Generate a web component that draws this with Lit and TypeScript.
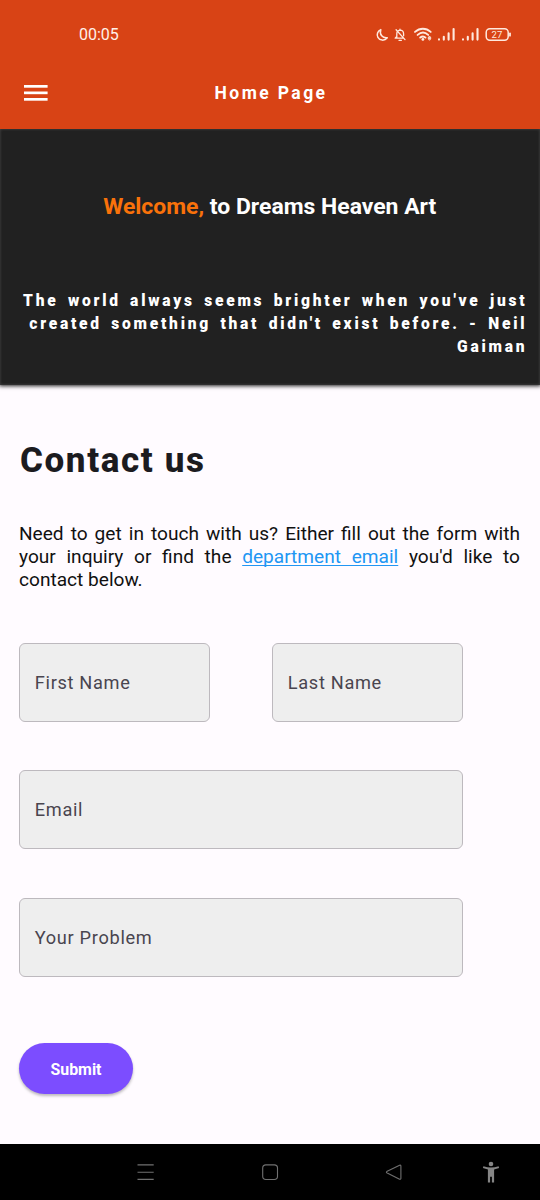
import { LitElement, html, css } from "lit";
import { customElement } from "lit/decorators.js";

@customElement("status-bar")
class StatusBar extends LitElement {
  static styles = css`
    :host { display: flex; justify-content: space-between; align-items: center; height: 69px; padding: 0 28px 0 79px; box-sizing: border-box; color: #fff0e8; }
    .time { font-size: 16px; letter-spacing: 0; line-height: 20px; }
    .icons { display: block; }
    .level { font: 9.5px Roboto, sans-serif; fill: #ffe9de; }
  `;
  render() {
    return html`
      <span class="time">00:05</span>
      <svg class="icons" width="137" height="20" viewBox="375 25 137 20" fill="none" stroke="#ffe9de" stroke-linecap="round" stroke-linejoin="round">
        <path stroke-width="1.5" d="M380.8 29.6C377.5 31.1 376.4 34.6 377.9 37.4C379.7 40.7 384.5 41.2 387.3 37.8C382.6 38.4 379.2 34.7 380.8 29.6Z" />
        <g stroke-width="1.3">
          <path d="M396.8 37.5V33.7C396.8 31.6 398.1 30.3 400 30.1C402.2 30.1 403.6 31.7 403.6 34V35.8M403.6 38.2H395.2L396.8 36.3M400 29.2V30M399 40.3H401.4M396.1 29.8L405 39.6" />
        </g>
        <g stroke-width="1.9">
          <path d="M415 31.9C419.8 27.7 426 27.7 430.7 31.9" />
          <path d="M417.6 34.9C421 32 425 32 428.2 34.9" />
          <path d="M420.2 37.6C422 36.1 424 36.1 425.5 37.6" />
        </g>
        <circle cx="422.9" cy="39.4" r="1.4" fill="#ffe9de" stroke="none" />
        <path stroke-width="1" d="M428.4 37.4L429.5 36L430.6 37.4ZM428.4 38.9L429.5 40.3L430.6 38.9Z" />
        <g stroke-width="2.1">
          <path d="M439 39.4V39.6M443.8 36.8V39.6M448.6 33.4V39.6M453.6 29.1V39.6" />
          <path d="M463 39.4V39.6M467.8 36.8V39.6M472.6 33.4V39.6M477.5 29.1V39.6" />
        </g>
        <rect x="486.2" y="28.8" width="22" height="11.4" rx="3.6" stroke-width="1.5" />
        <path stroke-width="1.8" d="M510 33.3V35.7" />
        <text class="level" stroke="none" x="491.6" y="37.8">27</text>
      </svg>
    `;
  }
}

@customElement("app-bar")
class AppBar extends LitElement {
  static styles = css`
    :host { display: grid; grid-template-columns: 1fr auto 1fr; align-items: center; height: 60px; padding: 0 22px 12px 24px; box-sizing: border-box; color: #fff; }
    .menu { display: block; }
    .title { margin: 0; font-size: 17.5px; line-height: 20px; font-weight: 700; letter-spacing: 2.4px; white-space: nowrap; }
  `;
  render() {
    return html`
      <svg class="menu" width="24" height="18" viewBox="0 0 24 18" fill="#fff">
        <rect y="1" width="23.6" height="2.7" /><rect y="7.5" width="23.6" height="2.7" /><rect y="14" width="23.6" height="2.7" />
      </svg>
      <h1 class="title">Home Page</h1>
    `;
  }
}

@customElement("form-field")
class FormField extends LitElement {
  static properties = { label: { type: String } };
  declare label: string;
  static styles = css`
    :host { display: flex; align-items: center; height: 79px; box-sizing: border-box; padding: 0 15px 0 14.8px; border: 1px solid #bdb9be; border-radius: 6px; background: #eee; color: #49454f; font-size: 18.2px; letter-spacing: 0.68px; white-space: nowrap; }
  `;
  render() {
    return html`<span>${this.label}</span>`;
  }
}

@customElement("nav-bar")
class NavBar extends LitElement {
  static styles = css`
    :host { display: block; height: 56px; background: #000; }
    .icons { display: block; }
  `;
  render() {
    return html`
      <svg class="icons" width="540" height="56" viewBox="0 1144 540 56" fill="none" stroke="#707070" stroke-width="1.1" stroke-linejoin="round">
        <path d="M137.5 1164.9H153.7M137.5 1172.2H153.7M137.5 1179.4H153.7" />
        <rect x="262.7" y="1164.9" width="14.8" height="14.6" rx="3.2" />
        <path d="M399.6 1165.2L387.2 1171.2Q385.6 1172.2 387.2 1173.1L399.6 1179.2Q400.9 1179.5 400.9 1178.2V1166.2Q400.9 1164.8 399.6 1165.2Z" />
        <g fill="#858585" stroke="none">
          <circle cx="491" cy="1164" r="2.3" />
          <path d="M483.4 1166.2Q491 1169 498.6 1166.2L499.1 1168.1L494.1 1169.4V1182.4H491.9V1176.8H490.1V1182.4H487.9V1169.4L482.9 1168.1Z" />
        </g>
      </svg>
    `;
  }
}

@customElement("app-root")
class AppRoot extends LitElement {
  static styles = css`
    :host { display: flex; flex-direction: column; width: 540px; height: 1200px; overflow: hidden; background: #fffbff; font-family: Roboto, sans-serif; color: #1c1b1f; }
    .top { background: #d84315; }
    .hero { height: 256px; box-sizing: border-box; padding: 64px 14px 0 0; background: #212121; box-shadow: 0 0 4px 1px #212121, inset 0 0 3px #4a4a4a; clip-path: inset(0 0 -8px 0); color: #fff; }
    .welcome { margin: 0; padding-left: 13.5px; text-align: center; font-size: 22.95px; line-height: 27px; font-weight: 700; white-space: nowrap; }
    .accent { color: #f9720a; }
    .quote { margin: 70px -1.3px 0 0; text-align: right; font-size: 15.6px; line-height: 23px; font-weight: 900; letter-spacing: 2.75px; word-spacing: 2.8px; white-space: nowrap; }
    .line { display: block; }
    .content { flex: 1; padding: 54px 20px 0 19px; }
    .heading { margin: 0 0 0 1px; font-size: 35px; line-height: 44px; font-weight: 800; letter-spacing: 1.6px; white-space: nowrap; }
    .intro { margin: 40px 0 0; font-size: 19.1px; line-height: 22.8px; color: #111; }
    .spread { display: block; text-align: justify; text-align-last: justify; white-space: nowrap; }
    .link { color: #2196f3; text-decoration: underline; text-decoration-thickness: 1.3px; text-underline-offset: 2px; text-decoration-skip-ink: none; }
    .form { display: grid; grid-template-columns: 191px 191px; column-gap: 62px; row-gap: 48.5px; margin-top: 51.6px; }
    .wide { grid-column: 1 / 3; }
    .submit { display: block; margin-top: 66.5px; width: 114px; height: 51px; padding: 1px 0 0; border: 0; border-radius: 26px; background: #7c4dff; color: #fff; font: 700 15.9px Roboto, sans-serif; box-shadow: 0 2px 3px #0004; }
  `;
  render() {
    return html`
      <header class="top"><status-bar></status-bar><app-bar></app-bar></header>
      <section class="hero">
        <h2 class="welcome"><span class="accent">Welcome,</span> to Dreams Heaven Art</h2>
        <p class="quote">
          <span class="line">The world always seems brighter when you've just</span>
          <span class="line">created something that didn't exist before. - Neil</span>
          <span class="line">Gaiman</span>
        </p>
      </section>
      <main class="content">
        <h2 class="heading">Contact us</h2>
        <p class="intro">
          <span class="spread">Need to get in touch with us? Either fill out the form with</span>
          <span class="spread">your inquiry or find the <a class="link">department email</a> you'd like to</span>
          <span>contact below.</span>
        </p>
        <div class="form">
          <form-field label="First Name"></form-field>
          <form-field label="Last Name"></form-field>
          <form-field class="wide" label="Email"></form-field>
          <form-field class="wide" label="Your Problem"></form-field>
        </div>
        <button class="submit">Submit</button>
      </main>
      <nav-bar></nav-bar>
    `;
  }
}
